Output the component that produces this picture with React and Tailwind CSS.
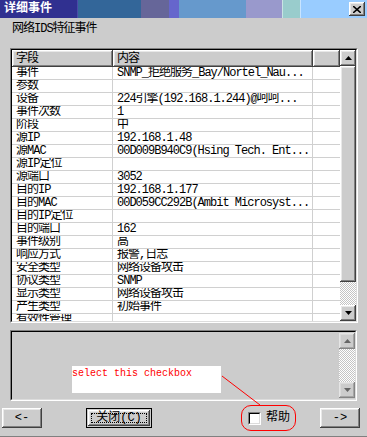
import React from 'react';

// 事件详细信息 rows: [field, content]
const rows = [
    ['事件', 'SNMP_拒绝服务_Bay/Nortel_Nau...'],
    ['参数', ''],
    ['设备', '224引擎(192.168.1.244)@呵呵...'],
    ['事件次数', '1'],
    ['阶段', '中'],
    ['源IP', '192.168.1.48'],
    ['源MAC', '00D009B940C9(Hsing Tech. Ent...'],
    ['源IP定位', ''],
    ['源端口', '3052'],
    ['目的IP', '192.168.1.177'],
    ['目的MAC', '00D059CC292B(Ambit Microsyst...'],
    ['目的IP定位', ''],
    ['目的端口', '162'],
    ['事件级别', '高'],
    ['响应方式', '报警,日志'],
    ['安全类型', '网络设备攻击'],
    ['协议类型', 'SNMP'],
    ['显示类型', '网络设备攻击'],
    ['产生类型', '初始事件'],
    ['有效性管理', ''],
];

const raised = 'shadow-[inset_-1px_-1px_#404040,inset_1px_1px_#ffffff,inset_-2px_-2px_#808080,inset_2px_2px_#e8e8e8] bg-[#cccccc]';

const Arrow = ({ up }) => (
    <svg width="7" height="4" viewBox="0 0 7 4">
        <polygon points={up ? '3.5,0 7,4 0,4' : '0,0 7,0 3.5,4'} fill="#000" />
    </svg>
);

const ArrowBtn = ({ up, grey }) => (
    <div className={`flex h-[16px] w-[16px] shrink-0 items-center justify-center ${raised} ${grey ? 'opacity-50' : ''}`}>
        <Arrow up={up} />
    </div>
);

const Sunken = ({ className, children }) => (
    <div className={`border border-t-[#808080] border-l-[#808080] border-b-white border-r-white ${className}`}>
        <div className="flex h-full w-full border border-t-black border-l-black border-b-[#dcdcdc] border-r-[#dcdcdc]">
            {children}
        </div>
    </div>
);

const App = () => {
    return (
        <div className="relative flex h-[437px] w-[367px] flex-col overflow-hidden border-b border-b-[#808080] bg-[#cccccc] font-['Liberation_Mono','Noto_Sans_CJK_SC',monospace] text-[12px] leading-[13px] tracking-[-1px] text-black">
            {/* TITLE BAR */}
            <div className="flex h-[18px] shrink-0">
                <div className="flex w-[77px] items-center bg-[#303090] pl-[4px] text-[12px] font-bold tracking-normal text-white">详细事件</div>
                <div className="w-[1px] bg-[#4a4aa8]" />
                <div className="w-[63px] bg-[#336699]" />
                <div className="w-[28px] bg-[#666699]" />
                <div className="w-[10px] bg-[#6666cc]" />
                <div className="w-[67px] bg-[#6699cc]" />
                <div className="w-[36px] bg-[#9999cc]" />
                <div className="w-[1px] bg-[#c8e4e4]" />
                <div className="w-[17px] bg-[#99cccc]" />
                <div className="w-[1px] bg-[#c8e4ff]" />
                <div className="flex flex-1 items-start justify-end bg-[#99ccff] pr-[2px] pt-[2px]">
                    <div className={`flex h-[14px] w-[16px] items-center justify-center ${raised}`}>
                        <svg width="8" height="7" viewBox="0 0 8 7">
                            <path d="M0 0L8 7M8 0L0 7" stroke="#000" strokeWidth="1.6" />
                        </svg>
                    </div>
                </div>
            </div>

            {/* SUBTITLE */}
            <div className="h-[30px] shrink-0 pl-[12px] pt-[3px] text-[12px] leading-[16px]">网络IDS特征事件</div>

            {/* FIELD TABLE */}
            <Sunken className="mx-[10px] h-[275px] w-[348px] shrink-0">
                <div className="flex-1 overflow-hidden bg-white">
                    <div className="flex h-[17px] bg-[#cccccc]">
                        <div className={`w-[101px] pl-[4px] pt-[3px] ${raised}`}>字段</div>
                        <div className={`w-[200px] pl-[4px] pt-[3px] ${raised}`}>内容</div>
                        <div className={`flex-1 ${raised}`} />
                    </div>
                    {rows.map(([field, value]) => (
                        <div key={field} className="flex h-[13px] border-b border-b-[#d0d0d0]">
                            <div className="w-[101px] overflow-hidden whitespace-nowrap border-r border-r-[#d0d0d0] pl-[4px] leading-[12px]">{field}</div>
                            <div className="w-[200px] overflow-hidden whitespace-nowrap border-r border-r-[#d0d0d0] pl-[4px] leading-[12px]">{value}</div>
                            <div className="flex-1" />
                        </div>
                    ))}
                </div>
                <div className="flex w-[16px] flex-col">
                    <ArrowBtn up />
                    <div className={`h-[216px] ${raised}`} />
                    <div className="flex-1 bg-[repeating-conic-gradient(#ffffff_0%_25%,#c4c4c4_0%_50%)] bg-[length:2px_2px]" />
                    <ArrowBtn />
                </div>
            </Sunken>

            {/* DESCRIPTION AREA */}
            <Sunken className="mx-[10px] mt-[7px] h-[71px] w-[347px] shrink-0">
                <div className="flex-1 pl-[60px] pt-[34px]">
                    <div className="h-[27px] w-[149px] bg-white pt-[2px] text-[10px] leading-[12px] tracking-normal text-[#ff0000]">select this checkbox</div>
                </div>
                <div className="flex w-[16px] flex-col py-[1px]">
                    <ArrowBtn up grey />
                    <div className="flex-1 bg-[repeating-conic-gradient(#ffffff_0%_25%,#c4c4c4_0%_50%)] bg-[length:2px_2px]" />
                    <ArrowBtn grey />
                </div>
            </Sunken>

            {/* BUTTONS */}
            <div className="mt-[7px] flex h-[20px] shrink-0 items-center">
                <button className={`ml-[2px] flex h-[20px] w-[40px] items-center justify-center tracking-normal ${raised}`}>&lt;-</button>
                <button className="ml-[44px] flex h-[20px] w-[66px] items-center justify-center border border-black bg-[#cccccc] p-[1px]">
                    <span className={`flex h-full w-full items-center justify-center p-[3px] ${raised}`}>
                        <span className="flex h-full w-full items-center justify-center border border-dotted border-black text-[12px] tracking-normal">关闭(C)</span>
                    </span>
                </button>
                <div className="ml-[89px] flex h-[26px] w-[55px] items-center rounded-[10px] border border-[#ff0000] pl-[6px]">
                    <div className="h-[13px] w-[13px] border border-t-[#808080] border-l-[#808080] border-b-white border-r-white">
                        <div className="h-full w-full border border-t-black border-l-black border-b-[#dcdcdc] border-r-[#dcdcdc] bg-white" />
                    </div>
                    <span className="ml-[5px] text-[12px] tracking-normal">帮助</span>
                </div>
                <button className={`ml-[24px] flex h-[20px] w-[40px] items-center justify-center tracking-normal ${raised}`}>-&gt;</button>
            </div>

            {/* callout line */}
            <svg className="pointer-events-none absolute left-0 top-0" width="367" height="437">
                <line x1="222" y1="376" x2="260" y2="405" stroke="#ff0000" strokeWidth="1" />
            </svg>
        </div>
    );
};

export default App;
